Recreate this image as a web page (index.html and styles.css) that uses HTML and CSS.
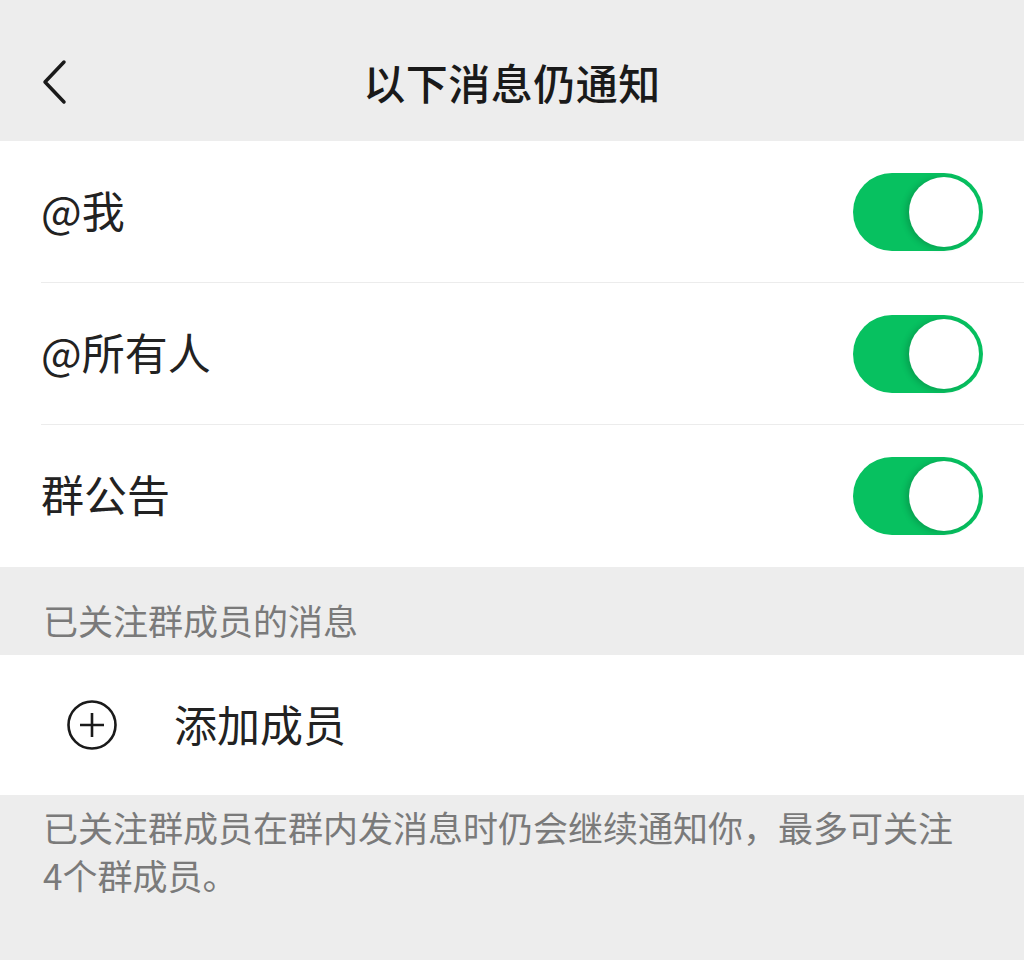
FILE: index.html
```html
<!DOCTYPE html>
<html lang="zh-CN">
<head>
<meta charset="utf-8">
<link rel="stylesheet" href="styles.css">
</head>
<body>
<div class="page">
  <header class="nav">
    <svg class="back" width="30" height="46" viewBox="0 0 30 46"><path d="M24 3 L5 23 L24 43" fill="none" stroke="#1a1a1a" stroke-width="3.5" stroke-linecap="round" stroke-linejoin="round"/></svg>
    <div class="title">以下消息仍通知</div>
  </header>
  <section class="group">
    <div class="row"><span class="label">@我</span><span class="switch"><span class="knob"></span></span></div>
    <div class="row"><span class="label">@所有人</span><span class="switch"><span class="knob"></span></span></div>
    <div class="row last"><span class="label">群公告</span><span class="switch"><span class="knob"></span></span></div>
  </section>
  <div class="section-title">已关注群成员的消息</div>
  <section class="group">
    <div class="add-row">
      <svg class="plus" width="52" height="52" viewBox="0 0 52 52"><circle cx="26" cy="26" r="23.5" fill="none" stroke="#1a1a1a" stroke-width="2.6"/><path d="M26 14 V38 M14 26 H38" stroke="#1a1a1a" stroke-width="2.6"/></svg>
      <span class="add-label">添加成员</span>
    </div>
  </section>
  <p class="footer">已关注群成员在群内发消息时仍会继续通知你，最多可关注 4个群成员。</p>
</div>
</body>
</html>
```
FILE: styles.css
```css
html, body {
  margin: 0;
  padding: 0;
  background: #ededed;
}
body {
  font-family: "Noto Sans CJK SC", "Noto Sans", sans-serif;
  color: #1a1a1a;
}
.page {
  width: 1024px;
  height: 960px;
  overflow: hidden;
  background: #ededed;
}
.nav {
  height: 141px;
  position: relative;
  display: flex;
  align-items: center;
  justify-content: center;
}
.back {
  position: absolute;
  left: 40px;
  top: 59px;
}
.title {
  font-size: 42px;
  font-weight: 500;
  margin-top: 22px;
  letter-spacing: 0.5px;
}
.group {
  background: #fff;
}
.row {
  height: 142px;
  margin-left: 41px;
  padding-right: 41px;
  display: flex;
  align-items: center;
  justify-content: space-between;
  border-bottom: 1.5px solid #ececec;
  box-sizing: border-box;
}
.row.last {
  border-bottom: none;
}
.label {
  font-size: 43px;
  margin-top: -6px;
  color: #222;
}
.switch {
  width: 130px;
  height: 78px;
  border-radius: 39px;
  background: #07c160;
  position: relative;
}
.knob {
  position: absolute;
  right: 4px;
  top: 4px;
  width: 70px;
  height: 70px;
  border-radius: 50%;
  background: #fff;
  box-shadow: -3px 1px 6px rgba(0,0,0,0.18);
}
.section-title {
  height: 88px;
  box-sizing: border-box;
  padding: 30px 0 0 43px;
  font-size: 35px;
  line-height: 46px;
  color: #7a7a7a;
}
.add-row {
  height: 140px;
  display: flex;
  align-items: center;
  padding-left: 66px;
}
.add-label {
  font-size: 43px;
  margin-left: 56px;
  margin-top: -4px;
  color: #222;
}
.footer {
  margin: 0;
  padding: 8px 56px 0 43px;
  font-size: 35px;
  line-height: 48px;
  color: #7a7a7a;
}
```
